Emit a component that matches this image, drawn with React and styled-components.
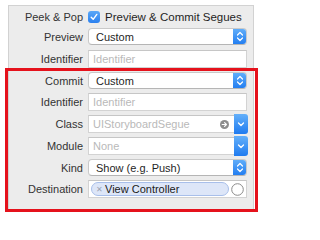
import React from "react";
import styled, { createGlobalStyle } from "styled-components";

const GlobalStyle = createGlobalStyle`
  html, body {
    margin: 0;
    padding: 0;
    background: #ffffff;
  }
  body {
    font-family: "Liberation Sans", Arial, sans-serif;
    font-size: 11px;
  }
`;

const Page = styled.div`
  width: 261px;
  height: 219px;
  padding-top: 5px;
  box-sizing: border-box;
  overflow: hidden;
`;

const Panel = styled.section`
  margin-left: 8px;
  width: 246px;
  box-sizing: border-box;
  background: #ececec;
  border-left: 1px solid #d2d2d2;
  border-right: 1px solid #d2d2d2;
  border-top: 1px solid #d2d2d2;
`;

const Rows = styled.div`
  display: grid;
  grid-template-columns: 74px 159px;
  column-gap: 5px;
  align-items: center;
  row-gap: ${(p) => p.$gap || 4}px;
  padding-top: ${(p) => p.$top || 0}px;
  padding-bottom: ${(p) => p.$bottom || 0}px;
`;

const Highlight = styled.div`
  margin: 0 -5px 0 -4px;
  border: 3px solid #e5121c;
  padding: 1px 7px 0 1px;
`;

const Label = styled.label`
  justify-self: end;
  color: #333333;
  font-size: 11px;
  white-space: nowrap;
`;

const CheckRow = styled.div`
  display: flex;
  align-items: center;
  gap: 5px;
  color: #1f1f1f;
  font-size: 11.5px;
  height: 12px;
`;

const CheckBox = styled.span`
  width: 12px;
  height: 12px;
  border-radius: 3px;
  background: linear-gradient(#5aa7f7, #2a80ef);
  display: flex;
  align-items: center;
  justify-content: center;
`;

const Popup = styled.div`
  height: 17px;
  box-sizing: border-box;
  display: flex;
  align-items: center;
  background: #fff;
  border: 1px solid #c9c9c9;
  border-bottom-color: #b5b5b5;
  border-radius: 4px;
  overflow: hidden;
  color: #1f1f1f;
  font-size: 11px;
`;

const PopupText = styled.span`
  flex: 1;
  padding-left: 7px;
`;

const BlueButton = styled.span`
  width: 14px;
  align-self: stretch;
  margin: -1px -1px -1px 0;
  background: linear-gradient(#64b0fa, #1f7bf0);
  border-radius: ${(p) => (p.$square ? "0 3px 3px 0" : "0 4px 4px 0")};
  display: flex;
  align-items: center;
  justify-content: center;
`;

const Field = styled.div`
  height: 18px;
  box-sizing: border-box;
  display: flex;
  align-items: center;
  background: #fff;
  border: 1px solid #d3d3d3;
  border-top-color: #c6c6c6;
  color: ${(p) => (p.$placeholder ? "#b9b9b9" : "#1f1f1f")};
  font-size: 11px;
  padding-left: ${(p) => p.$pad ?? 4}px;
  padding-right: 2px;
`;

const Combo = styled.div`
  height: 18px;
  display: flex;
`;

const ComboField = styled(Field)`
  flex: 1;
  border-right: none;
  padding-right: 5px;
`;

const ComboText = styled.span`
  flex: 1;
`;

const Token = styled.span`
  display: flex;
  align-items: center;
  width: 138px;
  height: 14px;
  box-sizing: border-box;
  border: 1px solid #a8bfea;
  background: #dde6f8;
  border-radius: 7px;
  color: #1a1a1a;
  font-size: 11px;
  padding-left: 4px;
  gap: 3px;
`;

const TokenX = styled.span`
  color: #9aa3b3;
  font-size: 8px;
  width: 6px;
`;

const RingSlot = styled.span`
  margin-left: auto;
  display: flex;
`;

const Stepper = () => (
  <svg width="8" height="11" viewBox="0 0 8 11">
    <path d="M1.5 4 L4 1.5 L6.5 4 M1.5 7 L4 9.5 L6.5 7" fill="none" stroke="#fff" strokeWidth="1.2" strokeLinecap="round" strokeLinejoin="round" />
  </svg>
);

const Chevron = () => (
  <svg width="8" height="6" viewBox="0 0 8 6">
    <path d="M1.5 2 L4 4.5 L6.5 2" fill="none" stroke="#fff" strokeWidth="1.3" strokeLinecap="round" strokeLinejoin="round" />
  </svg>
);

const Check = () => (
  <svg width="10" height="10" viewBox="0 0 10 10">
    <path d="M2.2 5.2 L4.2 7.3 L7.8 2.4" fill="none" stroke="#fff" strokeWidth="1.4" strokeLinecap="round" strokeLinejoin="round" />
  </svg>
);

const GoArrow = () => (
  <svg width="9" height="9" viewBox="0 0 9 9">
    <circle cx="4.5" cy="4.5" r="4.5" fill="#8d8d8d" />
    <path d="M2.2 4.5 H6.4 M4.6 2.7 L6.4 4.5 L4.6 6.3" fill="none" stroke="#fff" strokeWidth="1.2" strokeLinecap="round" strokeLinejoin="round" />
  </svg>
);

const Ring = () => (
  <svg width="13" height="13" viewBox="0 0 13 13">
    <circle cx="6.5" cy="6.5" r="5.8" fill="#fff" stroke="#8a8a8a" strokeWidth="1" />
  </svg>
);

const PopupButton = ({ value }) => (
  <Popup>
    <PopupText>{value}</PopupText>
    <BlueButton>
      <Stepper />
    </BlueButton>
  </Popup>
);

const ComboBox = ({ placeholder, children }) => (
  <Combo>
    <ComboField $placeholder>
      <ComboText>{placeholder}</ComboText>
      {children}
    </ComboField>
    <BlueButton $square>
      <Chevron />
    </BlueButton>
  </Combo>
);

export default function App() {
  return (
    <Page>
      <GlobalStyle />
      <Panel>
        <Rows $top={5} $gap={5} $bottom={0}>
          <Label>Peek &amp; Pop</Label>
          <CheckRow>
            <CheckBox>
              <Check />
            </CheckBox>
            Preview &amp; Commit Segues
          </CheckRow>
          <Label>Preview</Label>
          <PopupButton value="Custom" />
          <Label>Identifier</Label>
          <Field $placeholder>Identifier</Field>
        </Rows>
        <Highlight>
          <Rows $gap={4} $bottom={11}>
            <Label>Commit</Label>
            <PopupButton value="Custom" />
            <Label>Identifier</Label>
            <Field $placeholder>Identifier</Field>
            <Label>Class</Label>
            <ComboBox placeholder="UIStoryboardSegue">
              <GoArrow />
            </ComboBox>
            <Label>Module</Label>
            <ComboBox placeholder="None" />
            <Label>Kind</Label>
            <PopupButton value="Show (e.g. Push)" />
            <Label>Destination</Label>
            <Field $pad={2}>
              <Token>
                <TokenX>✕</TokenX>
                View Controller
              </Token>
              <RingSlot>
                <Ring />
              </RingSlot>
            </Field>
          </Rows>
        </Highlight>
      </Panel>
    </Page>
  );
}
